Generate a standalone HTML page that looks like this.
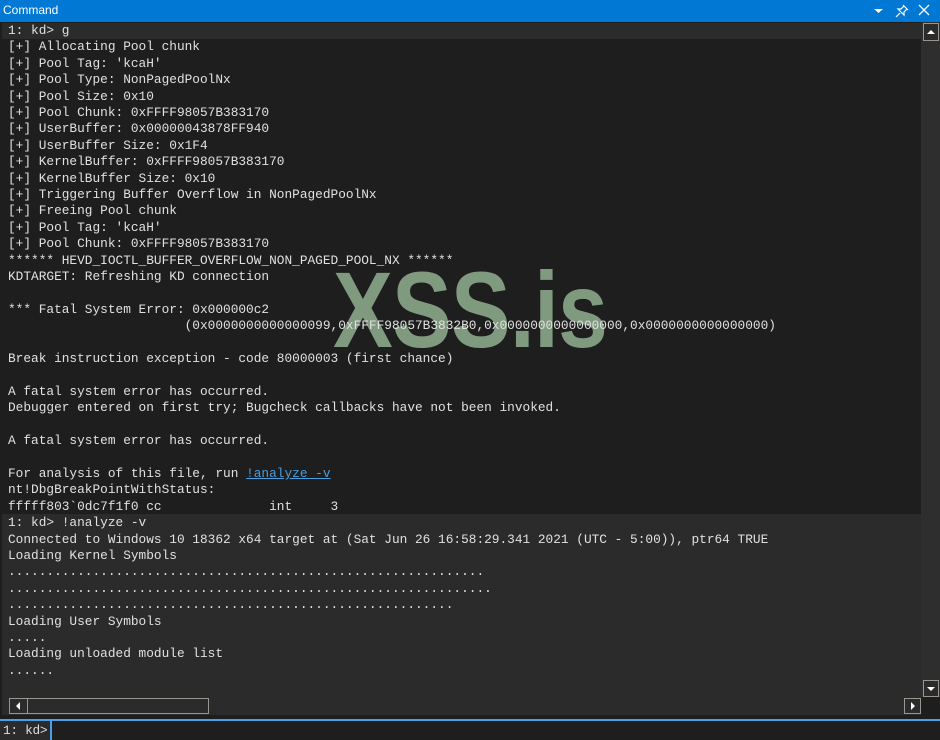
<!DOCTYPE html>
<html><head><style>
body{margin:0;width:940px;height:740px;background:#1e1e1e;overflow:hidden;position:relative;font-family:"Liberation Sans",sans-serif}
.title{position:absolute;left:0;top:0;width:940px;height:22px;background:#0078d4;color:#fff;font-size:12px;line-height:21px}
.title span{position:absolute;left:3px}
.out{position:absolute;left:2px;top:22px;width:919px;height:675px;background:#1e1e1e;overflow:hidden}
.out pre{margin:0;padding-top:1px;font-family:"Liberation Mono",monospace;font-size:12.8px;line-height:16.4px;color:#e0e0e0;padding-left:6px;white-space:pre;position:relative;z-index:2}
.hl{background:#2b2b2b;display:block;margin-left:-6px;padding-left:6px}
.lower{position:absolute;left:0;top:492px;width:919px;height:200px;background:#2b2b2b}
a{color:#4a9ee0;text-decoration:underline}
.wm{position:absolute;left:331px;top:225px;font-weight:bold;font-size:108px;color:#809a80;transform:scaleX(0.83);transform-origin:left top;letter-spacing:-1px;z-index:1}
.vs{position:absolute;left:921px;top:22px;width:19px;height:675px;background:#2e2e2e}
.btn{position:absolute;border:1px solid #9a968e;background:#2b2b2b}
.hs{position:absolute;left:2px;top:697px;width:919px;height:18px;background:#2b2b2b}
.in{position:absolute;left:0;top:719px;width:940px;height:21px;background:#1e1e1e;border-top:2px solid #4aa0e8;box-sizing:border-box}
.in span{position:absolute;left:0;top:0;width:52px;height:19px;background:#2b2b2b;border-right:2px solid #4aa0e8;color:#ddd;font-family:"Liberation Mono",monospace;font-size:12.8px;line-height:20px;padding-left:3px;box-sizing:border-box;white-space:nowrap;overflow:hidden;letter-spacing:-0.3px}
</style></head><body>
<div class="title"><span>Command</span>
<svg style="position:absolute;left:873px;top:6px" width="12" height="10"><path d="M1 3h9l-4.5 4z" fill="#fff"/></svg>
<svg style="position:absolute;left:895px;top:4px" width="14" height="14" fill="none" stroke="#fff" stroke-width="1.2"><path d="M8 1l5 5M9 2l-3 3-3 0 6 6 0-3 3-3M5 9l-4 4"/></svg>
<svg style="position:absolute;left:918px;top:4px" width="12" height="12" stroke="#fff" stroke-width="1.3"><path d="M1 1l10 10M11 1L1 11"/></svg>
</div>
<div class="out">
<div class="lower"></div>
<div class="wm">XSS.is</div>
<pre><span class="hl">1: kd&gt; g</span>[+] Allocating Pool chunk
[+] Pool Tag: 'kcaH'
[+] Pool Type: NonPagedPoolNx
[+] Pool Size: 0x10
[+] Pool Chunk: 0xFFFF98057B383170
[+] UserBuffer: 0x00000043878FF940
[+] UserBuffer Size: 0x1F4
[+] KernelBuffer: 0xFFFF98057B383170
[+] KernelBuffer Size: 0x10
[+] Triggering Buffer Overflow in NonPagedPoolNx
[+] Freeing Pool chunk
[+] Pool Tag: 'kcaH'
[+] Pool Chunk: 0xFFFF98057B383170
****** HEVD_IOCTL_BUFFER_OVERFLOW_NON_PAGED_POOL_NX ******
KDTARGET: Refreshing KD connection

*** Fatal System Error: 0x000000c2
                       (0x0000000000000099,0xFFFF98057B3832B0,0x0000000000000000,0x0000000000000000)

Break instruction exception - code 80000003 (first chance)

A fatal system error has occurred.
Debugger entered on first try; Bugcheck callbacks have not been invoked.

A fatal system error has occurred.

For analysis of this file, run <a>!analyze -v</a>
nt!DbgBreakPointWithStatus:
fffff803`0dc7f1f0 cc              int     3
1: kd&gt; !analyze -v
Connected to Windows 10 18362 x64 target at (Sat Jun 26 16:58:29.341 2021 (UTC - 5:00)), ptr64 TRUE
Loading Kernel Symbols
..............................................................
...............................................................
..........................................................
Loading User Symbols
.....
Loading unloaded module list
......

.............................................</pre>
</div>
<div class="vs">
<div class="btn" style="left:2px;top:1px;width:14px;height:16px"><svg width="14" height="16"><path d="M3 10h8l-4-4z" fill="#fff"/></svg></div>
<div class="btn" style="left:2px;top:658px;width:14px;height:15px"><svg width="14" height="15"><path d="M3 6h8l-4 4z" fill="#fff"/></svg></div>
</div>
<div class="hs">
<div class="btn" style="left:7px;top:1px;width:198px;height:14px"></div>
<div style="position:absolute;left:8px;top:2px;width:17px;height:14px;border-right:1px solid #9a968e"><svg width="17" height="14"><path d="M10 3v8l-4-4z" fill="#fff"/></svg></div>
<div class="btn" style="left:902px;top:1px;width:15px;height:14px"><svg width="15" height="14"><path d="M6 3v8l4-4z" fill="#fff"/></svg></div>
</div>
<div class="in"><span>1: kd&gt;</span></div>
</body></html>
